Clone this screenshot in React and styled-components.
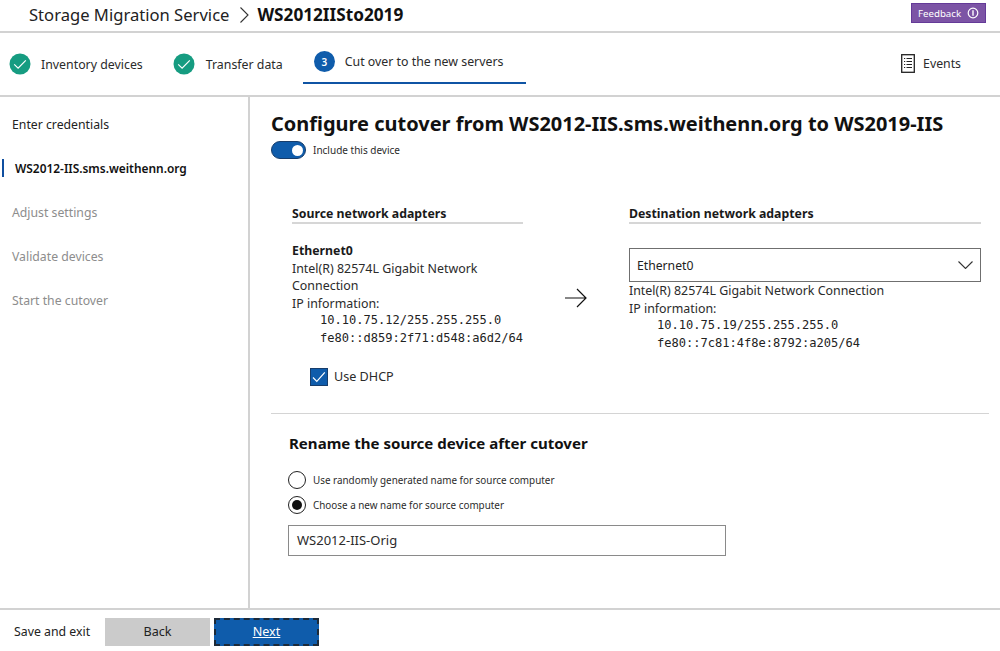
import styled, { createGlobalStyle } from "styled-components";

const GlobalStyle = createGlobalStyle`
  html, body {
    margin: 0;
    padding: 0;
    background: #fff;
  }
  body {
    font-family: "Noto Sans", "Open Sans", sans-serif;
    color: #1a1a1a;
  }
`;

const Page = styled.div`
  display: flex;
  flex-direction: column;
  width: 1000px;
  height: 651px;
  overflow: hidden;
`;

const Header = styled.header`
  display: flex;
  align-items: center;
  justify-content: space-between;
  height: 33px;
  padding: 0 14px 2px 29px;
  box-sizing: border-box;
  border-bottom: 2px solid #d2d2d2;
`;

const Breadcrumb = styled.div`
  display: flex;
  align-items: center;
  font-size: 16.6px;
  color: #222;
`;

const Current = styled.span`
  margin-left: 8px;
  font-weight: 700;
  font-size: 17.2px;
  color: #111;
`;

const Feedback = styled.div`
  display: flex;
  align-items: center;
  align-self: flex-start;
  gap: 6px;
  width: 75px;
  height: 20px;
  margin-top: 3px;
  padding-left: 6px;
  box-sizing: border-box;
  border: 1px solid #643a98;
  background: #7c54a5;
  color: #fff;
  font-size: 9.7px;
`;

const Stepper = styled.nav`
  display: flex;
  align-items: flex-start;
  height: 62px;
  padding-left: 8px;
  border-bottom: 2px solid #d2d2d2;
`;

const Step = styled.div`
  display: flex;
  align-items: center;
  gap: ${(props) => props.$textGap}px;
  height: 62px;
  margin-right: ${(props) => props.$gap}px;
  font-size: 12.35px;
  color: #2b2b2b;
`;

const ActiveStep = styled.div`
  display: flex;
  align-items: center;
  gap: 10px;
  width: 223px;
  height: 51px;
  padding: 8px 0 0 11px;
  box-sizing: border-box;
  border-bottom: 2px solid #0f54a4;
  font-size: 12.35px;
  color: #2b2b2b;
`;

const StepNumber = styled.span`
  display: flex;
  align-items: center;
  justify-content: center;
  width: 21px;
  height: 21px;
  border-radius: 50%;
  background: #0f5cab;
  color: #fff;
  font-size: 10px;
  font-weight: 600;
`;

const Events = styled.div`
  display: flex;
  align-items: center;
  gap: 8px;
  margin-left: auto;
  margin-right: 39px;
  height: 60px;
  font-size: 12.3px;
  color: #2b2b2b;
`;

const Body = styled.div`
  display: flex;
  flex: 1;
  min-height: 0;
`;

const Sidebar = styled.aside`
  display: flex;
  flex-direction: column;
  width: 250px;
  box-sizing: border-box;
  padding-top: 5px;
  border-right: 2px solid #d2d2d2;
`;

const SideItem = styled.div`
  display: flex;
  align-items: center;
  position: relative;
  height: 44px;
  padding-left: ${(props) => (props.$active ? "15px" : "12px")};
  font-size: ${(props) => (props.$active ? "11.9px" : "12.25px")};
  font-weight: ${(props) => (props.$active ? 600 : 400)};
  color: ${(props) =>
    props.$disabled ? "#8d8d8d" : props.$active ? "#111" : "#222"};

  ${(props) =>
    props.$active &&
    `&::before {
      content: "";
      position: absolute;
      left: 2px;
      top: 13px;
      width: 2px;
      height: 18px;
      background: #0f4fa0;
    }`}
`;

const Main = styled.main`
  flex: 1;
  padding: 13px 11px 0 21px;
  min-width: 0;
`;

const Title = styled.h1`
  margin: 0;
  font-size: 19.98px;
  line-height: 27px;
  font-weight: 700;
  color: #111;
  white-space: nowrap;
`;

const ToggleRow = styled.div`
  display: flex;
  align-items: center;
  gap: 7px;
  margin-top: 4px;
  font-size: 10px;
  color: #2b2b2b;
`;

const ToggleTrack = styled.span`
  display: flex;
  align-items: center;
  justify-content: flex-end;
  width: 35px;
  height: 18px;
  padding-right: 2px;
  box-sizing: border-box;
  border: 1px solid #173d6b;
  border-radius: 9px;
  background: #0f5cab;
`;

const ToggleKnob = styled.span`
  width: 11px;
  height: 11px;
  border-radius: 50%;
  background: #fff;
`;

const Adapters = styled.section`
  display: flex;
  margin-top: 47px;
  padding-left: 21px;
  padding-bottom: 27px;
  border-bottom: 1px solid #d4d4d4;
`;

const SourceColumn = styled.div`
  width: 231px;
`;

const ArrowColumn = styled.div`
  display: flex;
  justify-content: center;
  width: 106px;
  padding-top: 82px;
`;

const DestColumn = styled.div`
  width: 352px;
`;

const ColumnTitle = styled.h3`
  margin: 0 0 18px;
  padding-bottom: 1px;
  border-bottom: 2px solid #d6d6d6;
  font-size: 12.3px;
  line-height: 15px;
  font-weight: 700;
  color: #1a1a1a;
`;

const AdapterName = styled.div`
  font-size: 12.3px;
  line-height: 17.6px;
  font-weight: 700;
`;

const Line = styled.div`
  font-size: 12.42px;
  line-height: 17.6px;
  color: #2b2b2b;
`;

const Mono = styled.div`
  margin-left: 28px;
  font-family: "DejaVu Sans Mono", "Liberation Mono", monospace;
  font-size: 12.05px;
  line-height: 17.6px;
  color: #222;
  white-space: nowrap;
`;

const DhcpRow = styled.label`
  display: flex;
  align-items: center;
  gap: 6px;
  margin: 20px 0 0 18px;
  font-size: 12.6px;
  color: #2b2b2b;
`;

const CheckBox = styled.span`
  display: flex;
  align-items: center;
  justify-content: center;
  width: 18px;
  height: 18px;
  box-sizing: border-box;
  background: #0f5cab;
  border: 1px solid #173d6b;
`;

const Select = styled.div`
  display: flex;
  align-items: center;
  justify-content: space-between;
  height: 34px;
  margin-top: 24px;
  padding: 0 7px;
  box-sizing: border-box;
  border: 1px solid #6f6f6f;
  font-size: 12.2px;
  color: #222;
`;

const Rename = styled.section`
  padding: 17px 0 0 17px;
`;

const SubTitle = styled.h2`
  margin: 0 0 16px 1px;
  font-size: 15.05px;
  line-height: 24px;
  font-weight: 700;
  color: #111;
`;

const RadioRow = styled.label`
  display: flex;
  align-items: center;
  gap: 7px;
  height: 18px;
  margin-bottom: 7px;
  font-size: 9.88px;
  color: #2b2b2b;
`;

const Radio = styled.span`
  display: flex;
  align-items: center;
  justify-content: center;
  width: 18px;
  height: 18px;
  box-sizing: border-box;
  border: 1px solid #222;
  border-radius: 50%;

  &::after {
    content: "";
    display: ${(props) => (props.$checked ? "block" : "none")};
    width: 10px;
    height: 10px;
    border-radius: 50%;
    background: #111;
  }
`;

const NameInput = styled.div`
  display: flex;
  align-items: center;
  width: 438px;
  height: 31px;
  margin-top: 11px;
  padding-left: 8px;
  box-sizing: border-box;
  border: 1px solid #8a8a8a;
  font-size: 13px;
  color: #2b2b2b;
`;

const Footer = styled.footer`
  display: flex;
  align-items: center;
  height: 43px;
  padding: 2px 0 0 14px;
  box-sizing: border-box;
  border-top: 2px solid #d2d2d2;
  font-size: 12.3px;
  color: #222;
`;

const SaveExit = styled.span`
  width: 91px;
`;

const BackButton = styled.div`
  display: flex;
  align-items: center;
  justify-content: center;
  width: 105px;
  height: 28px;
  margin-right: 4px;
  background: #cbcbcb;
  color: #222;
  font-size: 12.6px;
`;

const NextButton = styled(BackButton)`
  margin: 0;
  background: #0f5cab;
  color: #fff;
  text-decoration: underline;
  outline: 2px dashed #1d2a38;
  outline-offset: -2px;
`;

const CheckCircle = () => (
  <svg width="24" height="24" viewBox="0 0 24 24">
    <circle cx="12" cy="12" r="10.5" fill="#169c81" />
    <path d="M6.2 12.4l3.9 3.7 7.7-7.8" fill="none" stroke="#fff" strokeWidth="1.2" />
  </svg>
);

const InfoIcon = () => (
  <svg width="12" height="12" viewBox="0 0 12 12">
    <circle cx="6" cy="6" r="4.8" fill="none" stroke="#fff" strokeWidth="1.2" />
    <path d="M6 3.2v5.6" stroke="#fff" strokeWidth="1.4" />
  </svg>
);

const EventsIcon = () => (
  <svg width="14" height="19" viewBox="0 0 14 19">
    <rect x="0.7" y="0.7" width="12.6" height="17.6" fill="none" stroke="#222" strokeWidth="1.3" />
    <path
      d="M3 4.5h1.2M5.5 4.5h5.5M3 7.5h1.2M5.5 7.5h5.5M3 10.5h1.2M5.5 10.5h5.5M3 13.5h1.2M5.5 13.5h5.5"
      stroke="#222"
      strokeWidth="1.1"
    />
  </svg>
);

const Chevron = () => (
  <svg width="15" height="8" viewBox="0 0 15 8">
    <path d="M0.5 0.5l7 7 7-7" fill="none" stroke="#333" strokeWidth="1.1" />
  </svg>
);

export default function App() {
  return (
    <Page>
      <GlobalStyle />
      <Header>
        <Breadcrumb>
          Storage Migration Service
          <svg width="9" height="16" viewBox="0 0 9 16" style={{ marginLeft: 11 }}>
            <path d="M0.5 0.5l7.5 7.5-7.5 7.5" fill="none" stroke="#333" strokeWidth="1.1" />
          </svg>
          <Current>WS2012IISto2019</Current>
        </Breadcrumb>
        <Feedback>
          Feedback <InfoIcon />
        </Feedback>
      </Header>

      <Stepper>
        <Step $gap={29} $textGap={9}>
          <CheckCircle />
          Inventory devices
        </Step>
        <Step $gap={20} $textGap={10}>
          <CheckCircle />
          Transfer data
        </Step>
        <ActiveStep>
          <StepNumber>3</StepNumber>
          Cut over to the new servers
        </ActiveStep>
        <Events>
          <EventsIcon />
          Events
        </Events>
      </Stepper>

      <Body>
        <Sidebar>
          <SideItem>Enter credentials</SideItem>
          <SideItem $active>WS2012-IIS.sms.weithenn.org</SideItem>
          <SideItem $disabled>Adjust settings</SideItem>
          <SideItem $disabled>Validate devices</SideItem>
          <SideItem $disabled>Start the cutover</SideItem>
        </Sidebar>

        <Main>
          <Title>Configure cutover from WS2012-IIS.sms.weithenn.org to WS2019-IIS</Title>
          <ToggleRow>
            <ToggleTrack>
              <ToggleKnob />
            </ToggleTrack>
            Include this device
          </ToggleRow>

          <Adapters>
            <SourceColumn>
              <ColumnTitle>Source network adapters</ColumnTitle>
              <AdapterName>Ethernet0</AdapterName>
              <Line>Intel(R) 82574L Gigabit Network Connection</Line>
              <Line>IP information:</Line>
              <Mono>10.10.75.12/255.255.255.0</Mono>
              <Mono>fe80::d859:2f71:d548:a6d2/64</Mono>
              <DhcpRow>
                <CheckBox>
                  <svg width="14" height="14" viewBox="0 0 14 14">
                    <path d="M1 7.5l3.8 3.8 8-9" fill="none" stroke="#fff" strokeWidth="1.2" />
                  </svg>
                </CheckBox>
                Use DHCP
              </DhcpRow>
            </SourceColumn>

            <ArrowColumn>
              <svg width="22" height="20" viewBox="0 0 22 20">
                <path d="M0 10h21M12 1l9 9-9 9" fill="none" stroke="#111" strokeWidth="1.2" />
              </svg>
            </ArrowColumn>

            <DestColumn>
              <ColumnTitle>Destination network adapters</ColumnTitle>
              <Select>
                Ethernet0
                <Chevron />
              </Select>
              <Line>Intel(R) 82574L Gigabit Network Connection</Line>
              <Line>IP information:</Line>
              <Mono>10.10.75.19/255.255.255.0</Mono>
              <Mono>fe80::7c81:4f8e:8792:a205/64</Mono>
            </DestColumn>
          </Adapters>

          <Rename>
            <SubTitle>Rename the source device after cutover</SubTitle>
            <RadioRow>
              <Radio />
              Use randomly generated name for source computer
            </RadioRow>
            <RadioRow>
              <Radio $checked />
              Choose a new name for source computer
            </RadioRow>
            <NameInput>WS2012-IIS-Orig</NameInput>
          </Rename>
        </Main>
      </Body>

      <Footer>
        <SaveExit>Save and exit</SaveExit>
        <BackButton>Back</BackButton>
        <NextButton>Next</NextButton>
      </Footer>
    </Page>
  );
}
